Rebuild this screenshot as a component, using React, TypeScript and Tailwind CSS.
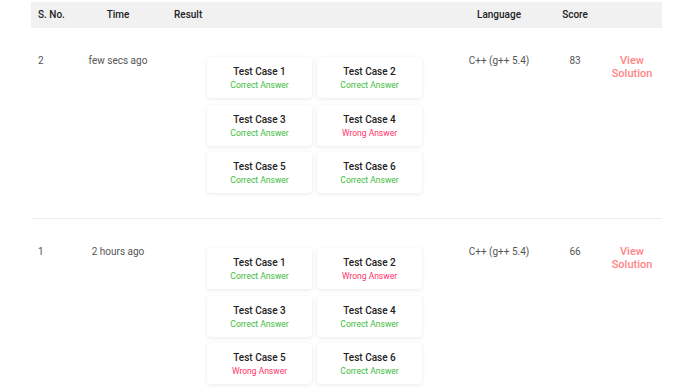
import React from "react";

type Sub = {
  no: string;
  time: string;
  results: boolean[];
  lang: string;
  score: string;
};

const subs: Sub[] = [
  { no: "2", time: "few secs ago", results: [true, true, true, false, true, true], lang: "C++ (g++ 5.4)", score: "83" },
  { no: "1", time: "2 hours ago", results: [true, false, true, true, false, true], lang: "C++ (g++ 5.4)", score: "66" },
];

function Card({ idx, ok }: { idx: number; ok: boolean }) {
  return (
    <div className="w-[105px] h-[41px] bg-white rounded-[4px] shadow-[0_1px_4px_rgba(0,0,0,0.09)] flex flex-col items-center pt-[9px]">
      <div className="text-[10px] leading-[12px] font-medium text-[#222]">Test Case {idx}</div>
      <div className={"text-[8.5px] leading-[10px] mt-[2px] " + (ok ? "text-[#3dbd3d]" : "text-[#ff3366]")}>
        {ok ? "Correct Answer" : "Wrong Answer"}
      </div>
    </div>
  );
}

export default function App() {
  return (
    <div className="w-[690px] h-[388px] bg-white overflow-hidden font-['Roboto',sans-serif]">
      <div className="ml-[31px] w-[631px]">
        <div className="mt-[2px] h-[26px] bg-[#f1f1f1] flex items-center pb-[1px] text-[10px] font-medium text-[#222]">
          <div className="w-[47px] pl-[7px]">S. No.</div>
          <div className="w-[80px] text-center">Time</div>
          <div className="w-[292px] pl-[16px]">Result</div>
          <div className="w-[98px] text-center">Language</div>
          <div className="w-[54px] text-center">Score</div>
          <div className="w-[60px]"></div>
        </div>
        {subs.map((s, i) => (
          <div key={i} className={"flex items-start pt-[26px] pb-[25px] text-[10px] leading-[14px] text-[#555] " + (i === 0 ? "border-b border-[#ececec]" : "")}>
            <div className="w-[47px] pl-[7px]">{s.no}</div>
            <div className="w-[80px] text-center">{s.time}</div>
            <div className="w-[292px] pl-[49px] pt-[3px]">
              <div className="grid grid-cols-[105px_105px] gap-x-[5px] gap-y-[6.5px]">
                {s.results.map((ok, j) => (
                  <Card key={j} idx={j + 1} ok={ok} />
                ))}
              </div>
            </div>
            <div className="w-[98px] text-center">{s.lang}</div>
            <div className="w-[54px] text-center">{s.score}</div>
            <div className="w-[60px] text-center text-[11px] leading-[13px] font-medium text-[#ff8585]">
              View<br />Solution
            </div>
          </div>
        ))}
      </div>
    </div>
  );
}
